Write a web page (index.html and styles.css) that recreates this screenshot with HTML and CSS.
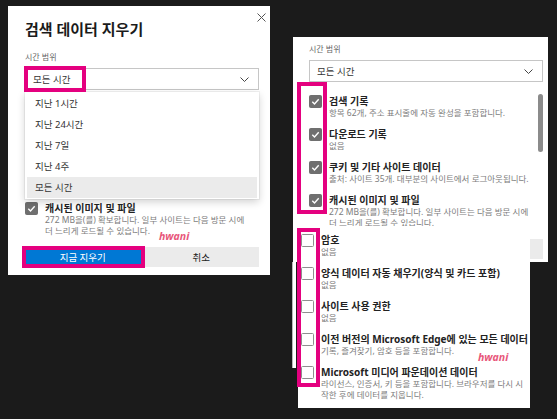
FILE: index.html
```html
<!DOCTYPE html>
<html lang="ko">
<head>
<meta charset="utf-8">
<title>검색 데이터 지우기</title>
<link rel="stylesheet" href="styles.css">
</head>
<body>
<div class="desk">

  <!-- left dialog with open dropdown -->
  <section class="dialog dialog-left">
    <h1 class="dlg-title">검색 데이터 지우기</h1>
    <button class="close" aria-label="닫기"><svg width="9" height="9" viewBox="0 0 9 9"><path d="M0.5 0.5 L8.5 8.5 M8.5 0.5 L0.5 8.5" stroke="#555" stroke-width="1" fill="none"/></svg></button>
    <div class="field-label">시간 범위</div>
    <div class="select-wrap">
      <div class="select"><span>모든 시간</span><svg class="chev" width="9" height="5" viewBox="0 0 9 5"><polyline points="0.5,0.5 4.5,4.5 8.5,0.5" stroke="#444" stroke-width="1" fill="none"/></svg></div>
      <ul class="dropdown">
        <li>지난 1시간</li>
        <li>지난 24시간</li>
        <li>지난 7일</li>
        <li>지난 4주</li>
        <li class="sel">모든 시간</li>
      </ul>
    </div>
    <div class="scroll">
      <div class="item covered"><span class="cb on"><svg width="13" height="13" viewBox="0 0 13 13"><polyline points="3.3,6.8 5.5,9 9.7,4.3" stroke="#fff" stroke-width="1.4" fill="none"/></svg></span><div class="txt"><div class="it-title">검색 기록</div><div class="it-desc"><span>항목 62개, 주소 표시줄에 자동 완성을 포함합니다.</span></div></div></div>
      <div class="item covered"><span class="cb on"><svg width="13" height="13" viewBox="0 0 13 13"><polyline points="3.3,6.8 5.5,9 9.7,4.3" stroke="#fff" stroke-width="1.4" fill="none"/></svg></span><div class="txt"><div class="it-title">다운로드 기록</div><div class="it-desc"><span>없음</span></div></div></div>
      <div class="item covered"><span class="cb on"><svg width="13" height="13" viewBox="0 0 13 13"><polyline points="3.3,6.8 5.5,9 9.7,4.3" stroke="#fff" stroke-width="1.4" fill="none"/></svg></span><div class="txt"><div class="it-title">쿠키 및 기타 사이트 데이터</div><div class="it-desc"><span>출처: 사이트 35개. 대부분의 사이트에서 로그아웃됩니다.</span></div></div></div>
      <div class="item"><span class="cb on"><svg width="13" height="13" viewBox="0 0 13 13"><polyline points="3.3,6.8 5.5,9 9.7,4.3" stroke="#fff" stroke-width="1.4" fill="none"/></svg></span><div class="txt"><div class="it-title">캐시된 이미지 및 파일</div><div class="it-desc"><span>272 MB을(를) 확보합니다. 일부 사이트는 다음 방문 시에</span><span>더 느리게 로드될 수 있습니다.</span></div></div></div>
      <div class="thumb"></div>
    </div>
    <div class="btn-row">
      <button class="btn primary">지금 지우기</button>
      <button class="btn">취소</button>
    </div>
  </section>

  <!-- right: same dialog, cropped view -->
  <div class="frame">
    <section class="dialog dialog-embedded">
      <h1 class="dlg-title covered">검색 데이터 지우기</h1>
      <div class="field-label">시간 범위</div>
      <div class="select-wrap">
        <div class="select"><span>모든 시간</span><svg class="chev" width="9" height="5" viewBox="0 0 9 5"><polyline points="0.5,0.5 4.5,4.5 8.5,0.5" stroke="#444" stroke-width="1" fill="none"/></svg></div>
      </div>
      <div class="scroll">
        <div class="item"><span class="cb on"><svg width="13" height="13" viewBox="0 0 13 13"><polyline points="3.3,6.8 5.5,9 9.7,4.3" stroke="#fff" stroke-width="1.4" fill="none"/></svg></span><div class="txt"><div class="it-title">검색 기록</div><div class="it-desc"><span>항목 62개, 주소 표시줄에 자동 완성을 포함합니다.</span></div></div></div>
        <div class="item"><span class="cb on"><svg width="13" height="13" viewBox="0 0 13 13"><polyline points="3.3,6.8 5.5,9 9.7,4.3" stroke="#fff" stroke-width="1.4" fill="none"/></svg></span><div class="txt"><div class="it-title">다운로드 기록</div><div class="it-desc"><span>없음</span></div></div></div>
        <div class="item"><span class="cb on"><svg width="13" height="13" viewBox="0 0 13 13"><polyline points="3.3,6.8 5.5,9 9.7,4.3" stroke="#fff" stroke-width="1.4" fill="none"/></svg></span><div class="txt"><div class="it-title">쿠키 및 기타 사이트 데이터</div><div class="it-desc"><span>출처: 사이트 35개. 대부분의 사이트에서 로그아웃됩니다.</span></div></div></div>
        <div class="item"><span class="cb on"><svg width="13" height="13" viewBox="0 0 13 13"><polyline points="3.3,6.8 5.5,9 9.7,4.3" stroke="#fff" stroke-width="1.4" fill="none"/></svg></span><div class="txt"><div class="it-title">캐시된 이미지 및 파일</div><div class="it-desc"><span>272 MB을(를) 확보합니다. 일부 사이트는 다음 방문 시에</span><span>더 느리게 로드될 수 있습니다.</span></div></div></div>
        <div class="thumb"></div>
      </div>
      <div class="btn-row">
        <button class="btn primary covered">지금 지우기</button>
        <button class="btn"><span class="covered">취소</span></button>
      </div>
    </section>
  </div>

  <div class="edge"></div>

  <!-- right: scrolled lower part of list -->
  <div class="panel">
    <div class="item"><span class="cb"></span><div class="txt"><div class="it-title">암호</div><div class="it-desc"><span>없음</span></div></div></div>
    <div class="item"><span class="cb"></span><div class="txt"><div class="it-title">양식 데이터 자동 채우기(양식 및 카드 포함)</div><div class="it-desc"><span>없음</span></div></div></div>
    <div class="item"><span class="cb"></span><div class="txt"><div class="it-title">사이트 사용 권한</div><div class="it-desc"><span>없음</span></div></div></div>
    <div class="item"><span class="cb"></span><div class="txt"><div class="it-title">이전 버전의 Microsoft Edge에 있는 모든 데이터</div><div class="it-desc"><span>기록, 즐겨찾기, 암호 등을 포함합니다.</span></div></div></div>
    <div class="item"><span class="cb"></span><div class="txt"><div class="it-title">Microsoft 미디어 파운데이션 데이터</div><div class="it-desc"><span>라이선스, 인증서, 키 등을 포함합니다. 브라우저를 다시 시</span><span>작한 후에 데이터를 지웁니다.</span></div></div></div>
  </div>

  <!-- annotations -->
  <div class="mark mark-select"></div>
  <div class="mark mark-clear"></div>
  <div class="mark mark-checked"></div>
  <div class="mark mark-unchecked"></div>
  <div class="wm wm-left">hwani</div>
  <div class="wm wm-right">hwani</div>
</div>
</body>
</html>
```

FILE: styles.css
```css
* { box-sizing: border-box; }

html, body {
  margin: 0;
  padding: 0;
}

body {
  background: #1b1b1b;
  font-family: "Noto Sans", "Noto Sans CJK KR", sans-serif;
  color: #222;
}

.desk {
  position: relative;
  width: 557px;
  height: 419px;
  overflow: hidden;
}

.covered { visibility: hidden; }

/* ---------- dialog ---------- */
.dialog {
  width: 262px;
  height: 269px;
  padding: 12px 11px 8px 17px;
  background: #fff;
  display: flex;
  flex-direction: column;
}

.dialog-left {
  position: absolute;
  left: 8px;
  top: 6px;
}

.frame {
  position: absolute;
  left: 293px;
  top: 37px;
  width: 255px;
  height: 225px;
  overflow: hidden;
  background: #fff;
}

.dialog-embedded {
  margin: -39px 0 0 -1px;
}

.dlg-title {
  margin: 0;
  font-size: 15px;
  line-height: 22px;
  font-weight: 700;
  color: #1b1b1b;
}

.close {
  position: absolute;
  top: 7px;
  right: 4px;
  width: 9px;
  height: 9px;
  padding: 0;
  border: 0;
  background: none;
  display: flex;
}

.field-label {
  margin-top: 11px;
  font-size: 8px;
  line-height: 12px;
  color: #666;
}

.select-wrap {
  position: relative;
  margin-top: 5px;
}

.select {
  height: 22px;
  border: 1px solid #c6c6c6;
  display: flex;
  align-items: center;
  justify-content: space-between;
  padding: 0 9px 0 7px;
  font-size: 9.5px;
  color: #333;
}

.chev { display: block; }

.dropdown {
  position: absolute;
  top: calc(100% + 2px);
  left: 0;
  right: 0;
  z-index: 10;
  margin: 0;
  padding: 1px 2px;
  list-style: none;
  background: #fff;
  box-shadow: 0 3px 8px rgba(0,0,0,0.18), 0 0 0 1px rgba(0,0,0,0.05);
}

.dropdown li {
  height: 21px;
  line-height: 21px;
  padding-left: 8px;
  font-size: 9.5px;
  color: #333;
}

.dropdown li.sel { background: #ebebeb; }

/* ---------- list ---------- */
.scroll {
  position: relative;
  height: 146px;
  padding-top: 13px;
  overflow: hidden;
  display: flex;
  flex-direction: column;
  gap: 10px;
}

.item {
  display: flex;
  align-items: flex-start;
  gap: 7px;
  flex: none;
}

.cb {
  flex: none;
  width: 13px;
  height: 13px;
  border: 1px solid #8e8e8e;
  border-radius: 1.5px;
  background: #fff;
  display: flex;
  align-items: center;
  justify-content: center;
}

.cb.on {
  background: #6f6f6f;
  border-color: #6f6f6f;
}

.cb svg { display: block; flex: none; }

.txt { min-width: 0; }

.it-title {
  font-size: 10px;
  line-height: 12px;
  font-weight: 700;
  color: #222;
  white-space: nowrap;
}

.it-desc {
  font-size: 8.5px;
  line-height: 11px;
  color: #7c7c7c;
}

.it-desc span {
  display: block;
  white-space: nowrap;
}

.thumb {
  position: absolute;
  right: 0;
  top: 12px;
  width: 5px;
  height: 58px;
  border-radius: 3px;
  background: #8b8b8b;
}

.btn-row {
  margin-top: 11px;
  height: 20px;
  display: flex;
  gap: 3px;
}

.btn {
  flex: 1;
  border: 0;
  padding: 0;
  font-family: inherit;
  font-size: 9.5px;
  background: #ebebeb;
  color: #222;
}

.btn.primary {
  background: #0078d4;
  color: #fff;
}

/* ---------- lower right panel ---------- */
.edge {
  position: absolute;
  left: 292px;
  top: 262px;
  width: 4px;
  height: 106px;
  background: #fff;
  border-left: 1px solid #b8b8b8;
}

.panel {
  position: absolute;
  left: 298px;
  top: 226px;
  width: 232px;
  height: 182px;
  padding: 8px 0 0 3px;
  background: #fff;
  overflow: hidden;
  display: flex;
  flex-direction: column;
  gap: 10px;
}

/* ---------- annotations ---------- */
.mark {
  position: absolute;
  border: 4px solid #e4007f;
  z-index: 20;
}

.mark-select { left: 24px; top: 66px; width: 62px; height: 26px; }
.mark-clear { left: 22px; top: 246px; width: 123px; height: 22px; }
.mark-checked { left: 297px; top: 82px; width: 30px; height: 132px; }
.mark-unchecked { left: 297px; top: 228px; width: 23px; height: 159px; }

.wm {
  position: absolute;
  z-index: 20;
  font-family: "Noto Sans", sans-serif;
  font-style: italic;
  font-weight: 700;
  font-size: 10.5px;
  line-height: 12px;
  color: #e8567a;
}

.wm-left { left: 159px; top: 230px; }
.wm-right { left: 478px; top: 351px; }
```
